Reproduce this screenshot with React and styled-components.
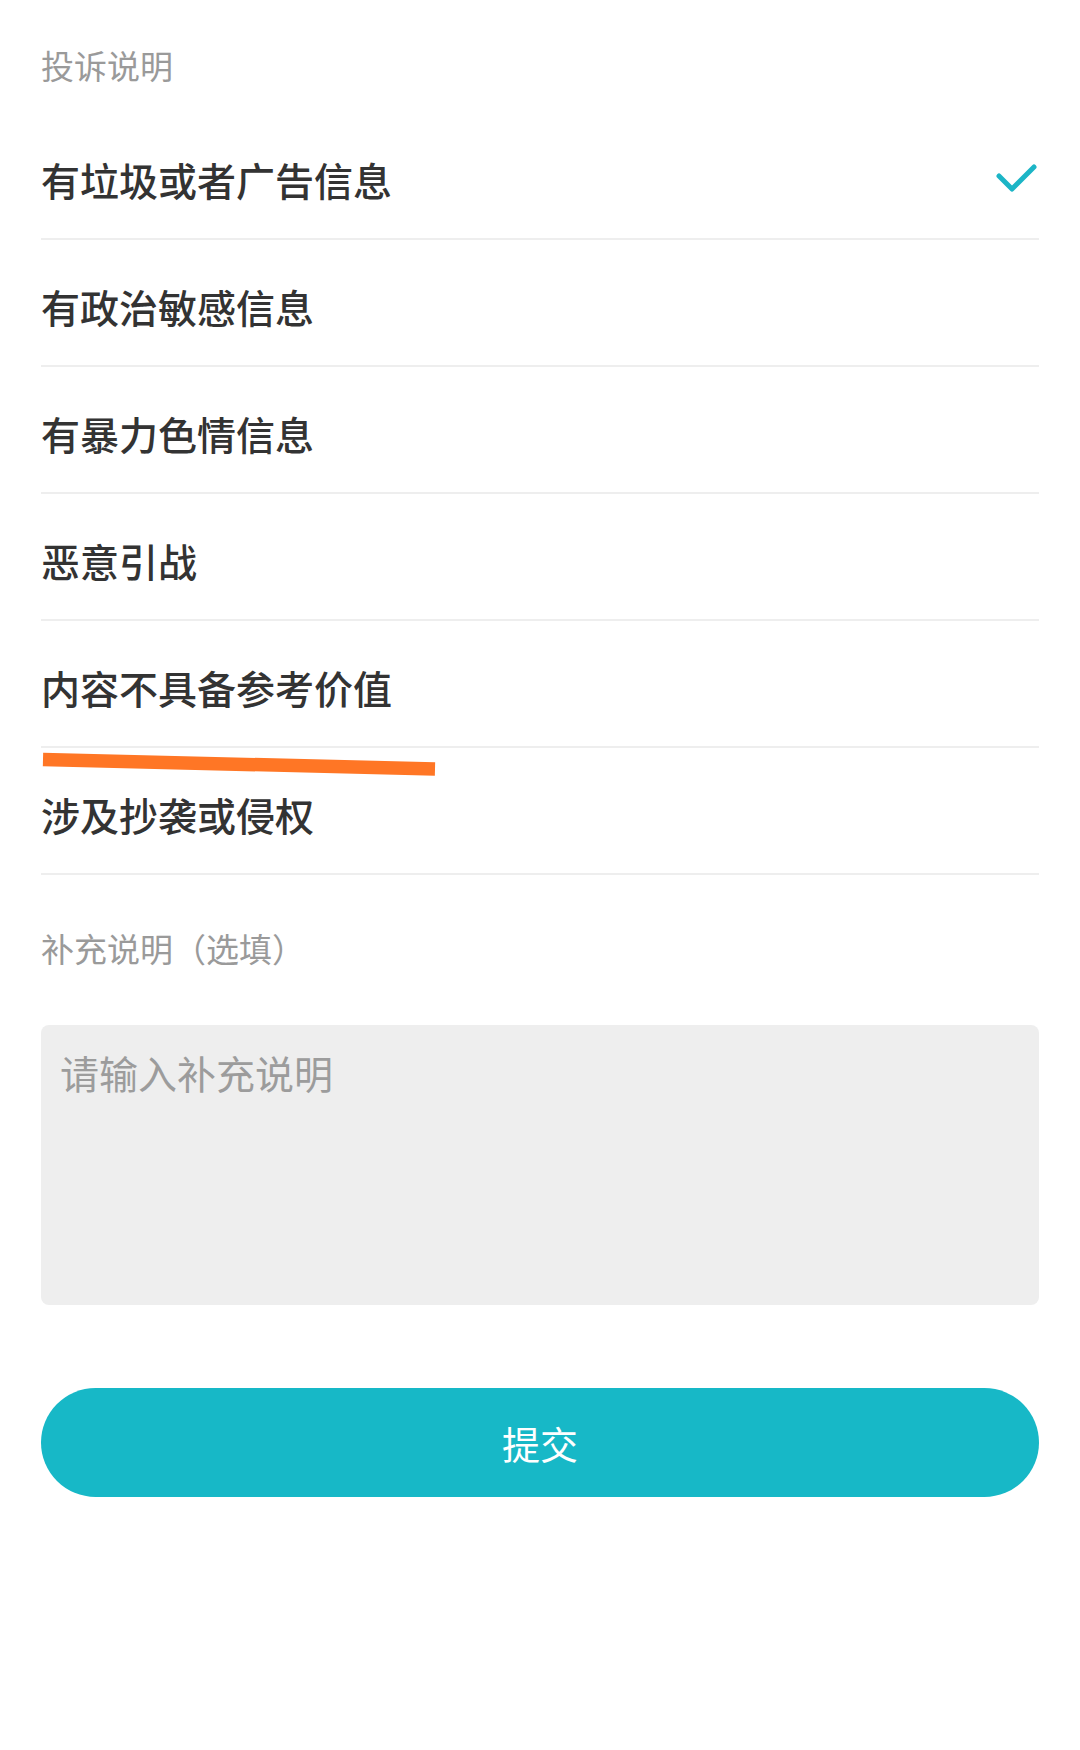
import styled, { createGlobalStyle } from "styled-components";

const reasons = [
  "有垃圾或者广告信息",
  "有政治敏感信息",
  "有暴力色情信息",
  "恶意引战",
  "内容不具备参考价值",
  "涉及抄袭或侵权",
];

const GlobalStyle = createGlobalStyle`
  body {
    margin: 0;
    background: #ffffff;
    font-family: "Noto Sans CJK SC", "Noto Sans", sans-serif;
  }
`;

const App = () => {
  const selected = 0;

  return (
    <StyledPage>
      <GlobalStyle />
      <StyledSectionTitle $first>投诉说明</StyledSectionTitle>

      <StyledList>
        {reasons.map((reason, i) => (
          <StyledRow key={reason}>
            <span>{reason}</span>
            {i === selected && (
              <StyledCheck viewBox="0 0 44 32" aria-hidden="true">
                <polyline points="4,14 17,27 39,5" />
              </StyledCheck>
            )}
          </StyledRow>
        ))}
      </StyledList>

      <StyledSectionTitle>补充说明（选填）</StyledSectionTitle>
      <StyledTextArea placeholder="请输入补充说明" />

      <StyledSubmit type="button">提交</StyledSubmit>

      {/* hand-drawn marker stroke over the list */}
      <StyledMarker viewBox="0 0 396 30" aria-hidden="true">
        <line x1="2" y1="9.5" x2="394" y2="19" />
      </StyledMarker>
    </StyledPage>
  );
};

const StyledPage = styled.div`
  position: relative;
  width: 1080px;
  min-height: 1750px;
  box-sizing: border-box;
  padding: 0 41px;
  display: flex;
  flex-direction: column;
`;

const StyledSectionTitle = styled.div`
  font-size: 33px;
  line-height: 38px;
  color: #9a9a9a;
  margin-top: ${(p) => (p.$first ? "46px" : "54px")};
  margin-bottom: ${(p) => (p.$first ? "29px" : "58px")};
`;

const StyledList = styled.div`
  display: flex;
  flex-direction: column;
`;

const StyledRow = styled.div`
  height: 127px;
  box-sizing: border-box;
  padding-top: 6px;
  border-bottom: 2px solid #eeeeee;
  display: flex;
  align-items: center;
  justify-content: space-between;
  font-size: 39px;
  font-weight: 500;
  color: #333333;
`;

const StyledCheck = styled.svg`
  width: 44px;
  height: 32px;
  margin-right: 0;
  margin-top: -2px;
  polyline {
    fill: none;
    stroke: #1cb5c6;
    stroke-width: 5;
    stroke-linecap: round;
    stroke-linejoin: round;
  }
`;

const StyledTextArea = styled.textarea`
  height: 280px;
  box-sizing: border-box;
  padding: 24px 19px;
  border: none;
  border-radius: 8px;
  background: #eeeeee;
  resize: none;
  outline: none;
  font-family: inherit;
  font-size: 39px;
  line-height: 46px;
  color: #333333;
  &::placeholder {
    color: #9c9c9c;
  }
`;

const StyledSubmit = styled.button`
  margin-top: 83px;
  height: 109px;
  border: none;
  border-radius: 55px;
  background: #17b8c7;
  color: #ffffff;
  font-family: inherit;
  font-size: 38px;
  font-weight: 400;
  padding: 0;
`;

const StyledMarker = styled.svg`
  position: absolute;
  left: 41px;
  top: 750px;
  width: 396px;
  height: 30px;
  line {
    stroke: #ff7625;
    stroke-width: 13.5;
  }
`;

export default App;
